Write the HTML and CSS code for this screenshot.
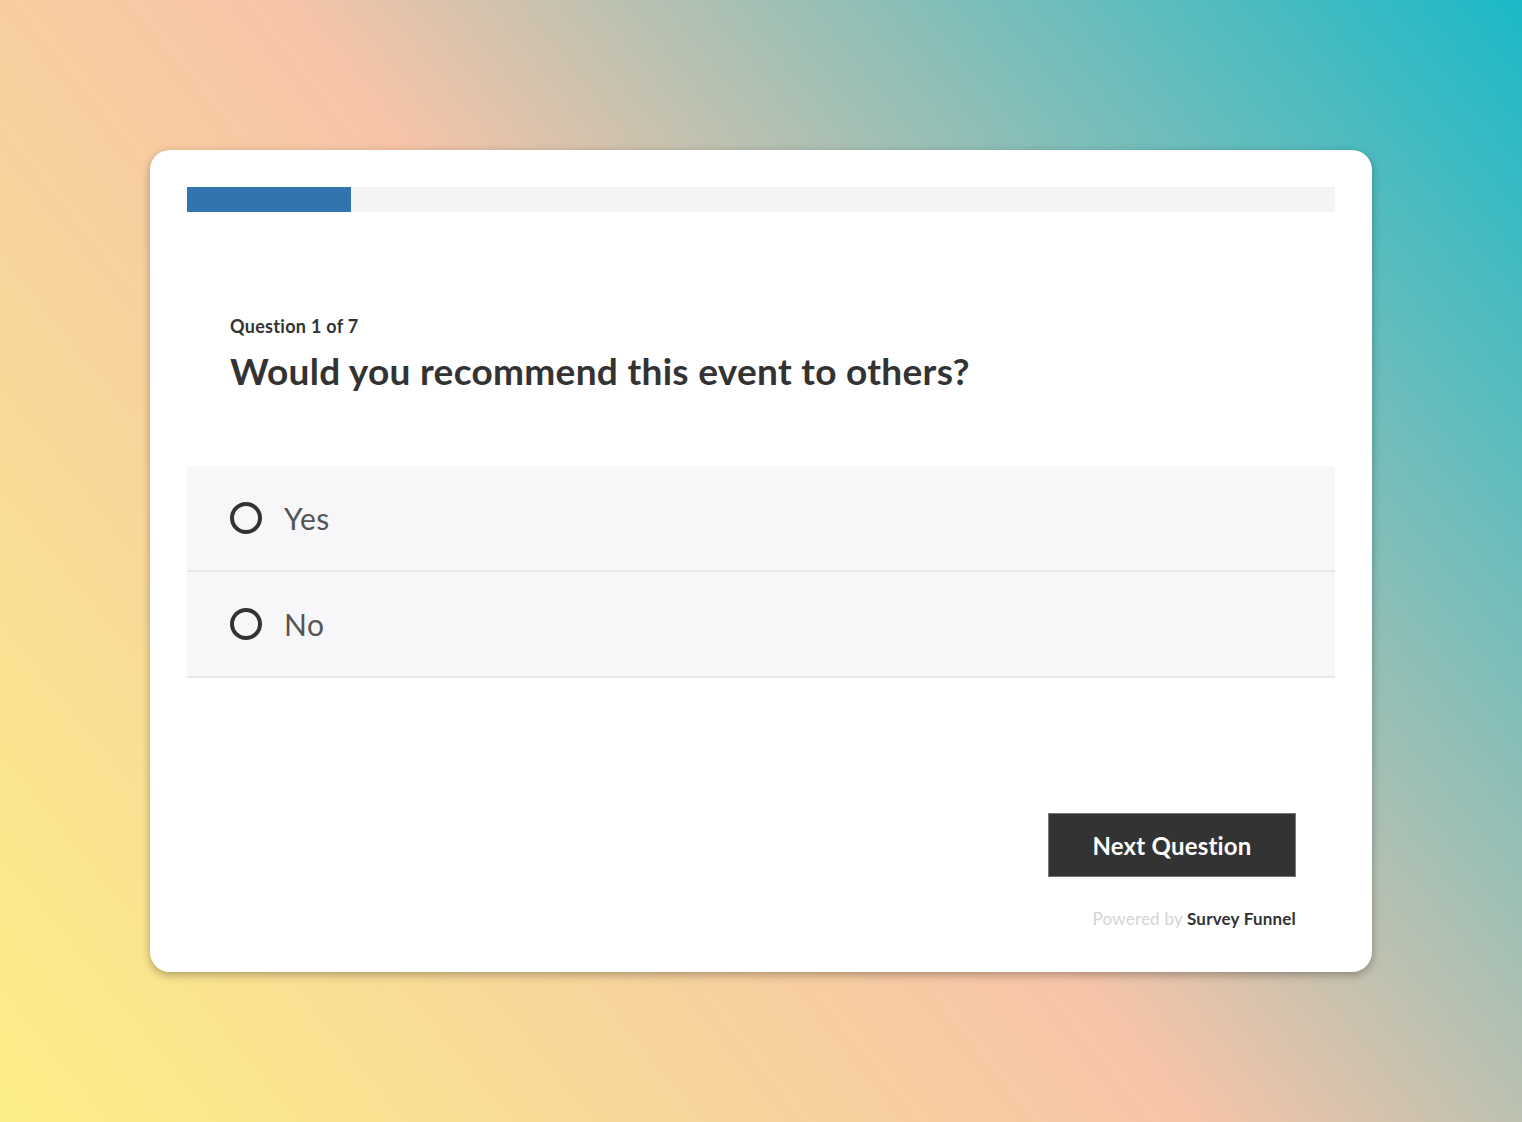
FILE: index.html
```html
<!DOCTYPE html>
<html lang="en">
<head>
<meta charset="utf-8">
<title>Survey</title>
<link rel="stylesheet" href="styles.css">
</head>
<body>
<main class="card">
  <div class="progress"><div class="progress-fill" style="width: 14.2857%"></div></div>
  <section class="question">
    <div class="question-count">Question 1 of 7</div>
    <h1 class="question-title">Would you recommend this event to others?</h1>
  </section>
  <div class="options">
    <label class="option"><span class="radio"></span><span class="option-text">Yes</span></label>
    <label class="option"><span class="radio"></span><span class="option-text">No</span></label>
  </div>
  <div class="footer">
    <button class="next-btn" type="button">Next Question</button>
    <div class="powered">Powered by <strong>Survey Funnel</strong></div>
  </div>
</main>
</body>
</html>
```
FILE: styles.css
```css
html, body {
  margin: 0;
  padding: 0;
}
body {
  width: 1522px;
  height: 1122px;
  box-sizing: border-box;
  padding: 150px;
  font-family: Lato, "Open Sans", sans-serif;
  color: #333;
  background: linear-gradient(51deg, #fdef87 0%, #f8d49c 30%, #f7c4a8 49%, #1bb9c7 100%);
}
.card {
  background: #fff;
  border-radius: 20px;
  box-shadow: 0 3px 10px rgba(0, 0, 0, 0.3);
  padding: 37px 37px 43px;
  box-sizing: border-box;
  height: 822px;
}
.progress {
  height: 25px;
  background: #f4f4f4;
}
.progress-fill {
  height: 100%;
  background: #3175b0;
}
.question {
  padding: 102px 43px 0;
}
.question-count {
  font-size: 18px;
  font-weight: 700;
  line-height: 24px;
  color: #333;
  letter-spacing: 0.3px;
}
.question-title {
  margin: 11px 0 0;
  font-size: 37px;
  font-weight: 700;
  line-height: 44px;
  color: #333;
  letter-spacing: 0.3px;
}
.options {
  margin-top: 73px;
}
.option {
  display: flex;
  align-items: center;
  gap: 22px;
  height: 104px;
  padding: 0 43px;
  background: #f7f7f9;
  border-bottom: 2px solid #e8e8ea;
}
.radio {
  width: 32px;
  height: 32px;
  box-sizing: border-box;
  border: 4px solid #333;
  border-radius: 50%;
  flex: none;
}
.option-text {
  font-size: 30px;
  color: #555;
  font-weight: 400;
  letter-spacing: 0.5px;
}
.footer {
  display: flex;
  flex-direction: column;
  align-items: flex-end;
  padding: 135px 39px 0;
}
.next-btn {
  width: 248px;
  height: 64px;
  background: #333;
  border: 1px solid #777;
  color: #fff;
  font-family: Lato, "Open Sans", sans-serif;
  font-size: 24px;
  font-weight: 700;
  letter-spacing: 0.2px;
  padding: 0;
}
.powered {
  margin-top: 32px;
  font-size: 17px;
  color: #d4d4d4;
  line-height: 20px;
  letter-spacing: 0.2px;
}
.powered strong {
  color: #333;
  font-weight: 700;
}
```
